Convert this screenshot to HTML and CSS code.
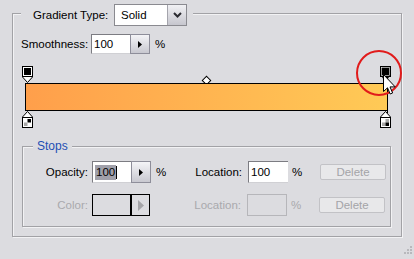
FILE: index.html
```html
<!DOCTYPE html>
<html>
<head>
<meta charset="utf-8">
<link rel="stylesheet" href="styles.css">
</head>
<body>
<div class="panel">
  <div class="group outer">
    <div class="head">
      <span class="head-lbl">Gradient Type:</span>
      <div class="select">
        <span class="sel-text">Solid</span>
        <span class="sel-btn"><svg width="9" height="6" viewBox="0 0 9 6"><path d="M1 1 L4.5 4.5 L8 1" fill="none" stroke="#2a2a30" stroke-width="2"/></svg></span>
      </div>
    </div>
    <div class="smooth">
      <span class="smooth-lbl">Smoothness:</span>
      <div class="num">
        <span class="field">100</span>
        <span class="step"><svg width="4" height="7" viewBox="0 0 4 7"><path d="M0 0 L4 3.5 L0 7 Z" fill="#000"/></svg></span>
      </div>
      <span class="pct">%</span>
    </div>
    <div class="editor">
      <svg class="stop top-left" width="11" height="17" viewBox="0 0 11 17">
        <rect x="0.5" y="0.5" width="10" height="10" fill="#fff" stroke="#000"/>
        <rect x="2" y="2" width="7" height="7" fill="#000"/>
        <path d="M0.5 11 L5.5 16.5 L10.5 11" fill="#fff" stroke="#000"/>
      </svg>
      <svg class="stop top-right" width="11" height="17" viewBox="0 0 11 17">
        <rect x="0.5" y="0.5" width="10" height="10" fill="#000" stroke="#000"/>
        <rect x="1.5" y="1.5" width="8" height="8" fill="none" stroke="#fff" stroke-width="0.6"/>
        <path d="M2 11 L5.5 16.5 L9 11 Z" fill="#000"/>
      </svg>
      <span class="diamond"></span>
      <div class="bar"></div>
      <span class="sel-line"></span>
      <svg class="stop bottom-left" width="11" height="17" viewBox="0 0 11 17">
        <path d="M0.5 6 L5.5 0.5 L10.5 6" fill="#fff" stroke="#000"/>
        <rect x="0.5" y="6.5" width="10" height="10" fill="#fff" stroke="#000"/>
        <rect x="5.5" y="8" width="3.5" height="3.5" fill="#000"/>
        <rect x="2" y="11.5" width="3.5" height="3.5" fill="#a8a8a8"/>
      </svg>
      <svg class="stop bottom-right" width="11" height="17" viewBox="0 0 11 17">
        <path d="M0.5 6 L5.5 0.5 L10.5 6" fill="#fff" stroke="#000"/>
        <rect x="0.5" y="6.5" width="10" height="10" fill="#fff" stroke="#000"/>
        <rect x="5.5" y="8" width="3.5" height="3.5" fill="#a8a8a8"/>
        <rect x="2" y="11.5" width="3.5" height="3.5" fill="#a8a8a8"/>
        <rect x="5.5" y="11.5" width="3.5" height="3.5" fill="#000"/>
      </svg>
    </div>
    <div class="group stops">
      <div class="legend">Stops</div>
      <div class="srow">
        <span class="slbl">Opacity:</span>
        <div class="num wide">
          <span class="field"><span class="selected">100</span><span class="caret"></span></span>
          <span class="step"><svg width="4" height="7" viewBox="0 0 4 7"><path d="M0 0 L4 3.5 L0 7 Z" fill="#000"/></svg></span>
        </div>
        <span class="pct2">%</span>
        <span class="llbl">Location:</span>
        <span class="loc">100</span>
        <span class="pct3">%</span>
        <span class="btn">Delete</span>
      </div>
      <div class="srow">
        <span class="slbl dis">Color:</span>
        <div class="color">
          <span class="swatch"></span>
          <span class="carrow"><svg width="6" height="11" viewBox="0 0 6 11"><path d="M0 0 L6 5.5 L0 11 Z" fill="#a4a4a8"/></svg></span>
        </div>
        <span class="pct2 dis hide">%</span>
        <span class="llbl dis">Location:</span>
        <span class="loc dis-box"></span>
        <span class="pct3 dis">%</span>
        <span class="btn">Delete</span>
      </div>
    </div>
  </div>
  <svg class="ring" width="48" height="48" viewBox="0 0 48 48">
    <circle cx="24" cy="24" r="22" fill="none" stroke="#e11b1b" stroke-width="2"/>
  </svg>
  <svg class="cursor" width="13" height="21" viewBox="0 0 13 21">
    <path d="M0.5 0.5 L0.5 17.5 L4.5 13.8 L7.2 20 L9.6 19 L7 12.9 L12.2 12.9 Z" fill="#fff" stroke="#000" stroke-width="1" stroke-linejoin="miter"/>
  </svg>
  <svg class="grip" width="11" height="11" viewBox="0 0 11 11">
    <rect x="8" y="0" width="2" height="2" fill="#b8b8bc"/>
    <rect x="5" y="3" width="2" height="2" fill="#b8b8bc"/>
    <rect x="8" y="3" width="2" height="2" fill="#b8b8bc"/>
    <rect x="2" y="6" width="2" height="2" fill="#b8b8bc"/>
    <rect x="5" y="6" width="2" height="2" fill="#b8b8bc"/>
    <rect x="8" y="6" width="2" height="2" fill="#b8b8bc"/>
  </svg>
</div>
</body>
</html>
```

FILE: styles.css
```css
html, body {
  margin: 0;
  padding: 0;
  background: #dcdce0;
}

body {
  font-family: "Liberation Sans", Arial, sans-serif;
  font-size: 11.5px;
  color: #000;
}

.panel {
  position: relative;
  width: 414px;
  height: 259px;
  overflow: hidden;
  padding-top: 13px;
  box-sizing: border-box;
}

.group {
  box-sizing: border-box;
  border: 1px solid #a2a2a6;
  box-shadow: inset 1px 1px 0 #f2f2f4, 1px 1px 0 #f2f2f4;
  display: flex;
  flex-direction: column;
}

.outer {
  margin-left: 12px;
  width: 390px;
  height: 224px;
}

.head {
  display: flex;
  align-items: center;
  width: max-content;
  margin-top: -10px;
  margin-left: 8px;
  padding: 0 6px 0 12px;
  background: #dcdce0;
  height: 22px;
}

.head-lbl {
  width: 81px;
}

.select {
  box-sizing: border-box;
  width: 73px;
  height: 22px;
  border: 1px solid #8a8a90;
  background: #fff;
  display: flex;
  align-items: center;
  justify-content: space-between;
}

.sel-text {
  padding-left: 6px;
}

.sel-btn {
  box-sizing: border-box;
  width: 19px;
  height: 20px;
  background: linear-gradient(#f1f1f4, #c6c6ce);
  border-left: 1px solid #a4a4ac;
  display: flex;
  align-items: center;
  justify-content: center;
}

.smooth {
  display: flex;
  align-items: center;
  margin-top: 8px;
  margin-left: 8px;
  height: 20px;
}

.smooth-lbl {
  width: 70px;
}

.num {
  display: flex;
  height: 20px;
}

.num.wide {
  height: 22px;
}

.field {
  box-sizing: border-box;
  width: 39px;
  height: 100%;
  background: #fff;
  border-top: 1px solid #7c7c82;
  border-left: 1px solid #7c7c82;
  border-bottom: 1px solid #d0d0d4;
  padding-left: 2px;
  display: flex;
  align-items: center;
}

.step {
  box-sizing: border-box;
  width: 20px;
  height: 100%;
  background: linear-gradient(#f4f4f7, #c8c8d0);
  border: 1px solid #8e8e9a;
  display: flex;
  align-items: center;
  justify-content: center;
}

.pct {
  margin-left: 5px;
}

.editor {
  position: relative;
  margin-top: 12px;
  margin-left: 8px;
  width: 372px;
  height: 62px;
}

.stop {
  position: absolute;
}

.top-left { left: 1px; top: 0; }
.top-right { left: 359px; top: 0; }
.bottom-left { left: 1px; top: 45px; }
.bottom-right { left: 359px; top: 45px; }

.bar {
  position: absolute;
  left: 4px;
  top: 17px;
  width: 362px;
  height: 28px;
  box-sizing: border-box;
  border: 1px solid #000;
  border-right: none;
  background: linear-gradient(to right, #ff9f4b, #ffca56);
}

.sel-line {
  position: absolute;
  left: 366px;
  top: 11px;
  width: 1px;
  height: 36px;
  background: #000;
}

.diamond {
  position: absolute;
  left: 182px;
  top: 11px;
  width: 5px;
  height: 5px;
  background: #fff;
  border: 1px solid #000;
  transform: rotate(45deg);
}

.stops {
  margin-top: 18px;
  margin-left: 9px;
  width: 369px;
  height: 81px;
}

.legend {
  width: max-content;
  margin-top: -8px;
  margin-left: 10px;
  padding: 0 4px;
  line-height: 14px;
  font-size: 12px;
  background: #dcdce0;
  color: #1e4fb4;
}

.srow {
  display: flex;
  align-items: center;
  height: 22px;
  margin-top: 8px;
}

.srow + .srow {
  margin-top: 11px;
}

.slbl {
  width: 65px;
  text-align: right;
  margin-right: 4px;
}

.dis {
  color: #a9a9ad;
}

.selected {
  background: #a0a0aa;
  line-height: 15px;
  padding: 0 1px;
}

.caret {
  display: inline-block;
  width: 1px;
  height: 13px;
  background: #000;
}

.pct2 {
  margin-left: 5px;
  width: 10px;
}

.hide {
  visibility: hidden;
}

.llbl {
  width: 76px;
  text-align: right;
  margin-right: 6px;
}

.loc {
  box-sizing: border-box;
  width: 40px;
  height: 22px;
  background: #fff;
  border-top: 1px solid #7c7c82;
  border-left: 1px solid #7c7c82;
  border-bottom: 1px solid #d0d0d4;
  padding-left: 2px;
  display: flex;
  align-items: center;
}

.loc.dis-box {
  background: #dcdce0;
  border: 1px solid #b6b6ba;
}

.pct3 {
  margin-left: 4px;
  width: 10px;
}

.btn {
  box-sizing: border-box;
  margin-left: 18px;
  width: 66px;
  height: 16px;
  border: 1px solid #c2c2c6;
  border-radius: 2px;
  background: #e8e8ea;
  color: #a4a4a8;
  display: flex;
  align-items: center;
  justify-content: center;
}

.color {
  box-sizing: border-box;
  width: 58px;
  height: 22px;
  border: 1px solid #000;
  display: flex;
}

.swatch {
  width: 37px;
  height: 100%;
  border-right: 2px solid #000;
}

.carrow {
  flex: 1;
  display: flex;
  align-items: center;
  justify-content: center;
}

.ring {
  position: absolute;
  left: 355px;
  top: 49px;
}

.cursor {
  position: absolute;
  left: 383px;
  top: 74px;
}

.grip {
  position: absolute;
  left: 402px;
  top: 246px;
}
```
